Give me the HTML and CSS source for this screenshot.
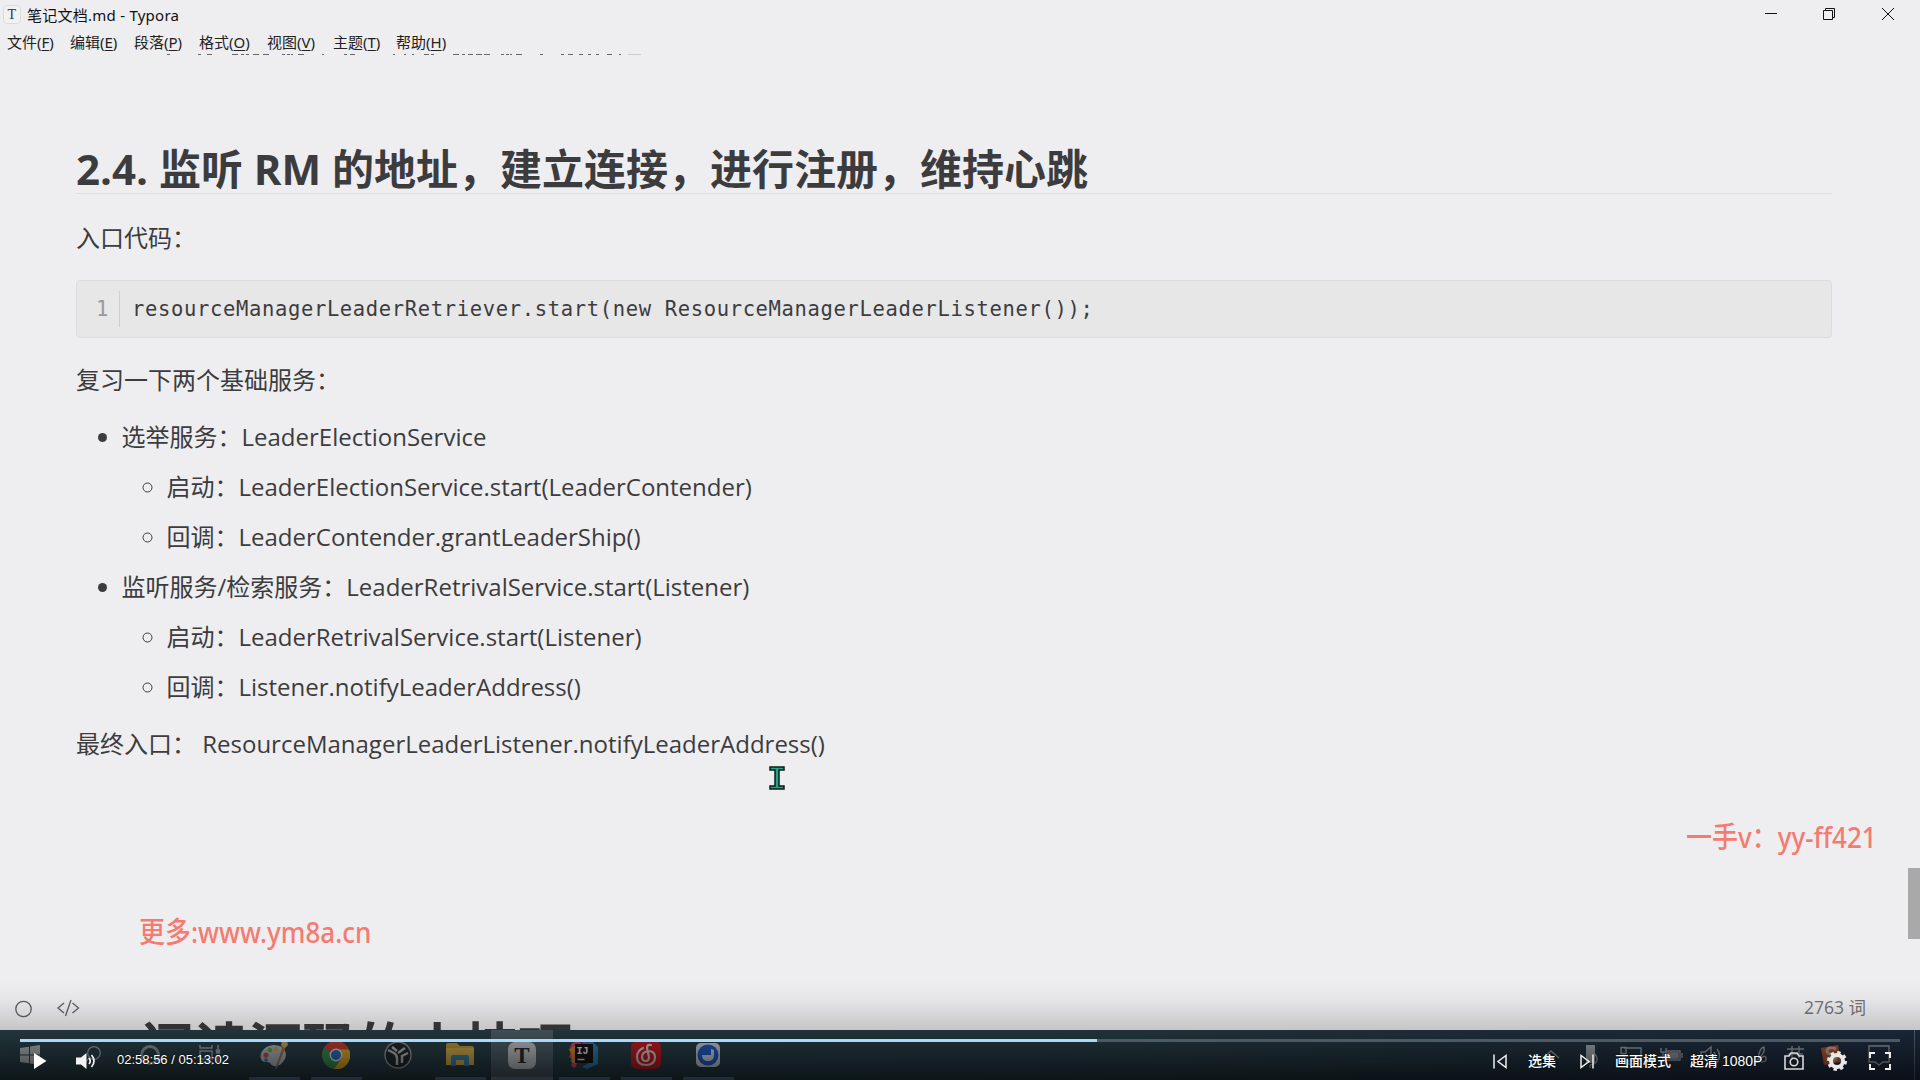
FILE: index.html
```html
<!DOCTYPE html>
<html lang="zh-CN">
<head>
<meta charset="utf-8">
<title>笔记文档.md - Typora</title>
<link rel="stylesheet" href="styles.css">
</head>
<body>
<div class="screen">
  <header class="titlebar">
    <span class="app-icon">T</span>
    <span class="window-title">笔记文档.md - Typora</span>
    <svg class="window-buttons" width="160" height="28" viewBox="0 0 160 28" fill="none" stroke="#111" stroke-width="1">
      <path d="M5 13.500h12M63.500 10.500h9v9h-9zM65.500 10V8.500h9v9H73M122 8l12 12M134 8l-12 12"/>
    </svg>
  </header>
  <nav class="menubar">
    <span>文件(<u>F</u>)</span><span>编辑(<u>E</u>)</span><span>段落(<u>P</u>)</span><span>格式(<u>O</u>)</span><span>视图(<u>V</u>)</span><span>主题(<u>T</u>)</span><span>帮助(<u>H</u>)</span>
  </nav>

  <main class="document">
    <svg class="scrolled-line" width="500" height="2" viewBox="0 0 500 2" stroke="#666" stroke-width="1" fill="none">
      <path d="M17 .5h3M48 .5h3M57 .5h5M82 .5h6M91 .5h3M96 .5h3M103 .5h6M113 .5h6M132 .5h3M137 .5h3M141 .5h2M148 .5h6M172 .5h2M194 .5h3M200 .5h5M243 .5h2M254 .5h2M262 .5h2M274 .5h5M281 .5h3M303 .5h6M312 .5h3M318 .5h5M326 .5h6M334 .5h6M351 .5h3M356 .5h3M360 .5h2M366 .5h6M390 .5h3M411 .5h3M418 .5h5M429 .5h4M438 .5h3M446 .5h3M457 .5h5M469 .5h2"/>
      <path d="M478 .5h13" stroke="#ccc"/>
    </svg>
    <h2>2.4. 监听 RM 的地址，建立连接，进行注册，维持心跳</h2>
    <p class="entry">入口代码：</p>
    <pre class="code-block"><span class="line-number">1</span><code>resourceManagerLeaderRetriever.start(new ResourceManagerLeaderListener());</code></pre>
    <p class="review">复习一下两个基础服务：</p>
    <ul class="services">
      <li>选举服务：LeaderElectionService
        <ul>
          <li>启动：LeaderElectionService.start(LeaderContender)</li>
          <li>回调：LeaderContender.grantLeaderShip()</li>
        </ul>
      </li>
      <li>监听服务/检索服务：LeaderRetrivalService.start(Listener)
        <ul>
          <li>启动：LeaderRetrivalService.start(Listener)</li>
          <li>回调：Listener.notifyLeaderAddress()</li>
        </ul>
      </li>
    </ul>
    <p class="final">最终入口： ResourceManagerLeaderListener.notifyLeaderAddress()</p>
    <h1>阅读源码的小技巧</h1>
  </main>

  <footer class="taskbar">
    <div class="task system start"><svg width="20" height="20" viewBox="0 0 20 20" fill="#a9b1b6"><path d="M0 3l9-1.300V9.500H0zM10 1.500L20 0v9.500H10zM0 10.500h9v7.800L0 17zM10 10.500h10V20l-10-1.500z"/></svg></div>
    <div class="task system search"><svg width="16" height="18" viewBox="0 0 16 18" fill="none" stroke="#9aa4a9" stroke-width="1.300"><circle cx="9" cy="7" r="6.300"/><path d="M4.500 11.500L0 17"/></svg></div>
    <div class="task system"><svg width="22" height="22" viewBox="0 0 22 22" fill="none" stroke="#87949a" stroke-width="3"><circle cx="11" cy="11" r="8.500"/></svg></div>
    <div class="task system"><svg width="22" height="20" viewBox="0 0 22 20" fill="none" stroke="#97a4aa" stroke-width="1.400"><path d="M1 0v3h12V0M1 6h12v8H1zM1 20v-3h12v3M19 0v4M19 10v8"/><path d="M17.500 5h3v3h-3z" fill="#87949a"/></svg></div>
    <div class="task app first running"><svg width="30" height="30" viewBox="0 0 30 30"><path d="M14 5C5 6 0 13 2 19c2 5 7 2 9 4 2 4 7 4 11 1 5-4 7-11 2-16-2-2-6-3-10-3z" fill="#a7b5bd"/><circle cx="7" cy="15" r="2.600" fill="#bd4d3c"/><circle cx="11" cy="10" r="2.300" fill="#6c9c4c"/><circle cx="17" cy="9" r="2.300" fill="#d19c3b"/><circle cx="7" cy="20" r="2" fill="#3f7cac"/><path d="M25 3l3 1-10 24-2 1z" fill="#a96f39"/><path d="M23 0l5 1 1 4-3 3-4-2z" fill="#bf9d69"/></svg></div>
    <div class="task app running chrome"><svg width="28" height="28" viewBox="0 0 28 28"><circle cx="14" cy="14" r="14" fill="#c53f32"/><path d="M14 14L2 7a14 14 0 0 0 10 20.900L20 17z" fill="#2f9150"/><path d="M27 8.500H14L20 17l-8 11A14 14 0 0 0 27 8.500z" fill="#d7aa28"/><circle cx="14" cy="14" r="6.500" fill="#d5d8db"/><circle cx="14" cy="14" r="5" fill="#3069bd"/></svg></div>
    <div class="task app"><svg width="28" height="28" viewBox="0 0 28 28" fill="none"><circle cx="14" cy="14" r="13" fill="#22282c" stroke="#8b9296" stroke-width="1.500"/><path d="M4 9l6 3q3 2 3 5v7M8 6l5 4M24 12l-6 3v7M21 7l-7 5" stroke="#b1b5b8" stroke-width="2.500"/></svg></div>
    <div class="task app running split"><svg width="28" height="24" viewBox="0 0 28 24"><path d="M0 2q0-2 2-2h9l3 3h12q2 0 2 2v17H0z" fill="#c2942e"/><path d="M0 5h28v17H0z" fill="#cdaa4e"/><path d="M5 23V14q0-2 2-2h14q2 0 2 2v9h-5v-6h-8v6z" fill="#387fac"/></svg></div>
    <div class="task app running active"><span class="typora-icon">T</span></div>
    <div class="task app running"><svg width="30" height="30" viewBox="0 0 30 30"><path d="M3 3l8-3 3 11-8 17-4-2 2-6-4-3 3-6-2-4z" fill="#c8456d"/><path d="M0 9l6-3 1 18-5-2 1-5z" fill="#d18333"/><path d="M11 0l9 3-3 5z" fill="#7953b0"/><path d="M18 3l5-2 6 6v17l-11 5-5-2 10-6z" fill="#267eae"/><path d="M6 4h18v19H6z" fill="#191316"/><text x="7.500" y="14" class="ij-text">IJ</text><path d="M8.500 19.500h7" stroke="#d5d5d5" stroke-width="1.500"/></svg></div>
    <div class="task app running"><svg width="30" height="28" viewBox="0 0 30 28"><rect width="30" height="28" rx="6" fill="#bd1d25"/><path d="M20 4q-4-1-4 3l2 9q0 4-3 4-4 0-4-4 0-5 6-6 7 0 7 6 0 8-9 8-9 0-9-8 0-6 6-9" fill="none" stroke="#dfc4c4" stroke-width="2.200" stroke-linecap="round"/></svg></div>
    <div class="task app running"><svg width="24" height="24" viewBox="0 0 24 24"><rect width="24" height="24" rx="5" fill="#c3cad2"/><circle cx="12" cy="12" r="10.500" fill="#1f5dc2"/><path d="M6 12h9V6l3 1v5q0 6-6 6t-6-6z" fill="#c8d2df"/></svg></div>
    <svg class="tray" width="400" height="50" viewBox="0 0 400 50" fill="none" stroke="#98a0a7" stroke-width="1.400">
      <path d="M23 28l8-7 8 7"/>
      <rect x="66" y="15" width="9" height="18" fill="#a2a9ae" stroke="none"/><path d="M75 24q6 9-5 11M70 35v3"/>
      <path d="M104 18h17v13h-14M101 17.500h5v6h-5zM104 24v10h16"/>
      <path d="M146 21h14v9h-14zM162 23v5M141 18v4h5v-4M143 22v8h4"/><path d="M148 23h10v5h-10z" fill="#92979d"/>
      <path d="M181 22h4l6-5v18l-6-6h-4zM194 22q3 4 0 8M197 19q5 6 0 14"/>
      <path d="M234 32q12-8 10-15-5 1-6 13 7-6 8-2t-5 4"/>
      <path d="M267 19h17M268 24h15M272 16v12M279 16v12"/>
      <path d="M301 18l17-3 3 17-17 3z" fill="#b35a34" stroke="none"/><path d="M316 19q-8-3-9 2 0 3 5 3 5 1 4 4-2 4-9 1" stroke="#cfa594" stroke-width="3"/>
      <path d="M349 16h20v16h-6l-4 3-4-3h-6z"/>
      <path d="M394.500 0v50" stroke="#5b6975" stroke-width="1"/>
    </svg>
  </footer>

  <div class="editor-status">
    <svg width="70" height="20" viewBox="0 0 70 20" fill="none" stroke="#5f5f61" stroke-width="1.300"><circle cx="8.500" cy="11" r="7.700"/><path d="M49 5l-6 5 6 5M57.500 5l6 5-6 5M56 2l-5.500 16"/></svg>
    <span>2763 词</span>
  </div>
  <div class="scroll-thumb"></div>
  <svg class="text-cursor" width="16" height="24" viewBox="0 0 16 24" fill="#26a488" stroke="#091e19" stroke-width="1.500"><path d="M1 1h14v3h-5v16h5v3H1v-3h5V4H1z"/></svg>
  <div class="watermark contact">一手v：yy-ff421</div>
  <div class="watermark site">更多:www.ym8a.cn</div>

  <div class="player">
    <div class="progress"><div class="played"></div></div>
    <div class="controls">
      <svg class="play" width="13" height="16" viewBox="0 0 13 16" fill="#fff"><path d="M0 0l12.500 8L0 16z"/></svg>
      <svg class="volume" width="22" height="18" viewBox="0 0 22 18" fill="none" stroke="#f2f2f2" stroke-width="1.700"><path d="M0 5.500h5L10.500 1v16L5 12.500H0z" fill="#f2f2f2" stroke="none"/><path d="M13 6q2.500 3 0 6M15.500 3q5 6 0 12"/></svg>
      <span class="time">02:58:56 / 05:13:02</span>
      <svg class="previous" width="14" height="15" viewBox="0 0 14 15" fill="none" stroke="#eee" stroke-width="1.500"><path d="M1 .5v14M13 1.500v12L5 7.500z"/></svg>
      <span class="episodes">选集</span>
      <svg class="next" width="14" height="15" viewBox="0 0 14 15" fill="none" stroke="#eee" stroke-width="1.500"><path d="M13 .5v14M1 1.500v12L9 7.500z"/></svg>
      <span class="mode">画面模式</span>
      <span class="quality">超清 1080P</span>
      <svg class="camera" width="20" height="18" viewBox="0 0 20 18" fill="none" stroke="#d9d9d9" stroke-width="1.600"><path d="M1 4h4l2-3h6l2 3h4v13H1z"/><circle cx="10" cy="10" r="3.800"/></svg>
      <svg class="gear" width="20" height="20" viewBox="0 0 20 20" fill="none" stroke="#e8e8e8"><circle cx="10" cy="10" r="6" stroke-width="4"/><circle cx="10" cy="10" r="8.500" stroke-width="3" stroke-dasharray="3.338 3.338"/></svg>
      <svg class="fullscreen" width="22" height="18" viewBox="0 0 22 18" fill="none" stroke="#f0f0f0" stroke-width="1.900"><path d="M1 6V1h5M16 1h5v5M21 12v5h-5M6 17H1v-5"/></svg>
    </div>
  </div>
</div>
</body>
</html>
```

FILE: styles.css
```css
* { box-sizing: border-box; }

body {
  margin: 0;
  background: #eeeef0;
  color: #3c3c3e;
  font-family: "Open Sans", "Noto Sans CJK SC", sans-serif;
}

.screen {
  position: relative;
  display: flex;
  flex-direction: column;
  width: 1920px;
  height: 1080px;
  overflow: hidden;
}

.titlebar {
  display: flex;
  align-items: center;
  flex: none;
  height: 28px;
  padding-left: 3px;
  color: #111;
  font-family: "Noto Sans", "Noto Sans CJK SC", sans-serif;
  font-size: 15px;
  letter-spacing: .25px;
}

.app-icon {
  width: 18px;
  height: 19px;
  border: 1px solid #dcdcdc;
  border-radius: 4px;
  background: #f1f1f1;
  color: #333;
  font: 14px/17px "Liberation Serif", serif;
  text-align: center;
}

.window-title { margin-left: 6px; }
.window-buttons { margin-left: auto; }

.menubar {
  display: grid;
  grid-template-columns: 63px 64px 65px 68px 66px 63px 80px;
  flex: none;
  height: 26px;
  padding-left: 7px;
  color: #222;
  font-family: "Noto Sans", "Noto Sans CJK SC", sans-serif;
  font-size: 15px;
  line-height: 29px;
}

.menubar u { text-underline-offset: 2px; }

.document {
  flex: 1;
  min-height: 0;
  overflow: hidden;
  padding: 0 88px 0 76px;
  font-size: 24px;
  line-height: 38px;
}

.scrolled-line { display: block; margin-left: 74px; }

.document h2 {
  margin: 86px 0 0;
  border-bottom: 1px solid #dededf;
  font-size: 42px;
  line-height: 54px;
  height: 52px;
  font-weight: 700;
  white-space: nowrap;
}

.document p { margin: 0; white-space: pre; }
.document .entry { margin-top: 25px; }

.code-block {
  display: flex;
  align-items: center;
  height: 58px;
  margin: 23px 0 0;
  border: 1px solid #dcdcdd;
  border-radius: 4px;
  background: #e7e7e8;
  font-family: "DejaVu Sans Mono", monospace;
  font-size: 20.5px;
  letter-spacing: .65px;
}

.code-block code { font: inherit; padding-left: 12px; }

.line-number {
  width: 43px;
  height: 36px;
  padding-right: 10px;
  border-right: 1px solid #d0d0d1;
  color: #999;
  line-height: 36px;
  text-align: right;
}

.document .review { margin-top: 23px; }

.services, .services ul {
  display: flex;
  flex-direction: column;
  gap: 12px;
  margin: 0;
  padding-left: 45px;
}

.services { margin-top: 19px; padding-left: 45.5px; }
.services ul { margin-top: 12px; }
.document .final { margin-top: 19px; }

.document h1 {
  margin: 251px 0 0 64px;
  font-size: 54px;
  line-height: 66px;
  white-space: nowrap;
}

.taskbar {
  display: flex;
  flex: none;
  height: 50px;
  background: linear-gradient(90deg, #293f47, #263b44 60%, #202f40 90%, #1f2d44);
}

.task {
  display: flex;
  align-items: center;
  justify-content: center;
  width: 62px;
}

.system { width: 60px; }
.search { padding-left: 5px; }
.first { margin-left: 3px; }

.running {
  background: linear-gradient(#56789b, #56789b) center bottom / 51px 3px no-repeat;
}

.active {
  background: linear-gradient(#6685a3, #6685a3) bottom / 62px 3px no-repeat, #4c5c65;
}

.typora-icon {
  width: 28px;
  height: 27px;
  border-radius: 7px;
  background: #bcc0c4;
  color: #282a2d;
  font: 700 23px/27px "Liberation Serif", serif;
  text-align: center;
}

.ij-text {
  fill: #e1e1e1;
  font: 700 10px "Liberation Mono", monospace;
}

.tray { margin-left: auto; }

.editor-status {
  position: absolute;
  left: 15px;
  right: 54px;
  top: 998px;
  display: flex;
  align-items: center;
  justify-content: space-between;
  height: 20px;
  color: #747476;
  font-size: 17.5px;
  line-height: 18px;
}

.editor-status span { padding-bottom: 2px; }

.scroll-thumb {
  position: absolute;
  right: 0;
  top: 868px;
  width: 12px;
  height: 71px;
  background: #a9a9a9;
}

.text-cursor { position: absolute; left: 769px; top: 766px; }

.watermark {
  position: absolute;
  color: #f57b70;
  font-family: "Noto Sans", "Noto Sans CJK SC", sans-serif;
  font-weight: 500;
  line-height: 40px;
  white-space: nowrap;
  transform: scaleY(1.12);
}

.contact { left: 1686px; top: 817px; font-size: 26px; }
.site { left: 139px; top: 912px; font-size: 26px; }

.player {
  position: absolute;
  inset: 980px 0 0;
  padding: 59px 20px 0;
  background: linear-gradient(rgba(0,0,0,0), rgba(0,0,0,.04) 20%, rgba(0,0,0,.17) 50%, rgba(0,0,0,.66));
}

.progress { height: 3px; background: #4d5963; }
.played { width: 1077px; height: 3px; background: #a9d8fb; }

.controls {
  display: flex;
  align-items: center;
  height: 38px;
  padding-left: 14px;
  color: #fff;
  font: 500 14px/20px "Liberation Sans", "Noto Sans CJK SC", sans-serif;
  text-shadow: 0 0 2px #000;
  white-space: nowrap;
}

.controls svg { flex: none; }
.volume { margin-left: 29px; }
.time { margin-left: 19px; padding-bottom: 2px; width: 114px; font-size: 13px; }
.previous { margin-left: 1262px; }
.episodes { margin-left: 21px; width: 28px; }
.next { margin-left: 24px; }
.mode { margin-left: 21px; width: 56px; }
.quality { margin-left: 19px; width: 74px; }
.camera { margin-left: 20px; }
.gear { margin-left: 23px; }
.fullscreen { margin-left: 22px; }
```
